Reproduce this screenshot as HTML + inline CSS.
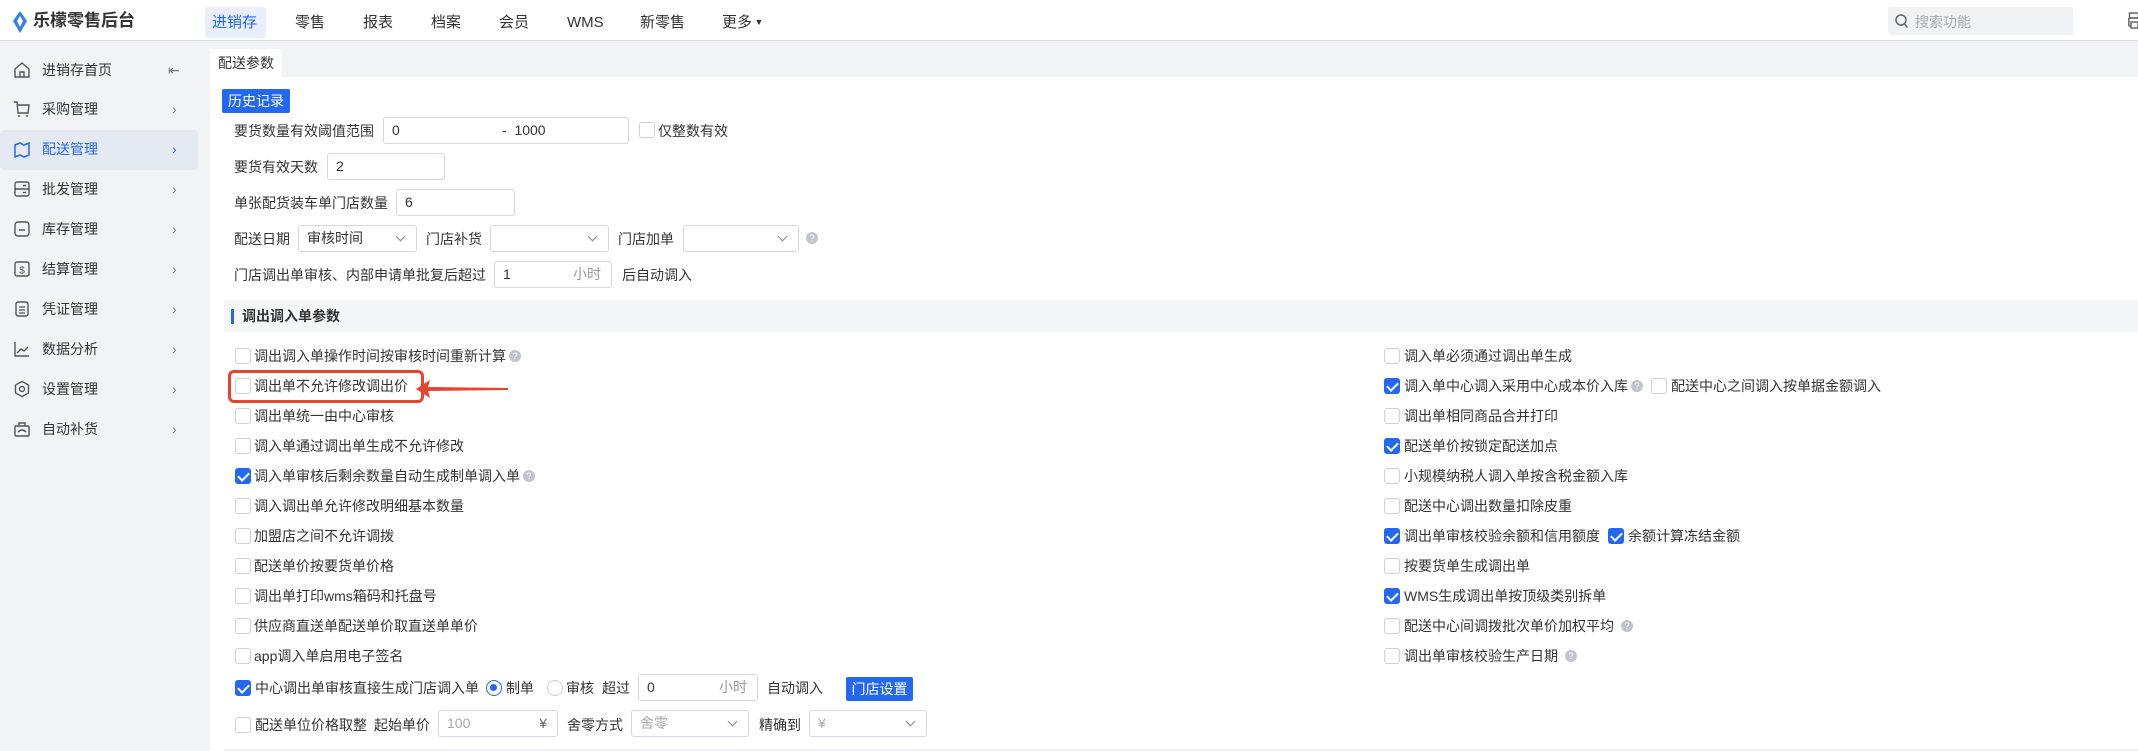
<!DOCTYPE html>
<html><head><meta charset="utf-8">
<style>
*{box-sizing:border-box;margin:0;padding:0}
body{width:2138px;height:751px;position:relative;overflow:hidden;background:#fff;font-family:"Liberation Sans","Noto Sans CJK SC",sans-serif;font-size:14px;color:#333}
.a{position:absolute;white-space:nowrap}
.hdr{left:0;top:0;width:2138px;height:41px;background:#fff;border-bottom:1px solid #dcdfe6}
.nav{top:7px;height:31px;line-height:31px;font-size:15px;color:#333}
.side{left:0;top:41px;width:210px;height:710px;background:#f2f3f5}
.si{left:0;width:198px;height:38px;line-height:38px;font-size:14px;color:#333}
.si .t{position:absolute;left:42px}
.si .c{position:absolute;left:172px;color:#777;font-size:14px}
.si svg{position:absolute;left:13px;top:10px}
.tabbar{left:210px;top:41px;width:1928px;height:36px;background:#f2f3f5}
.lbl{height:20px;line-height:20px}
.in{border:1px solid #d4d7de;border-radius:3px;background:#fff;height:27px;line-height:25px;padding-left:8px}
.cb{width:16px;height:16px;border:1px solid #cdd0d6;border-radius:3px;background:#fff}
.cb.on{background:#2468f2;border-color:#2468f2}
.cb.on:after{content:"";position:absolute;left:4px;top:1px;width:5px;height:9px;border:solid #fff;border-width:0 2px 2px 0;transform:rotate(45deg)}
.q{width:12px;height:12px;border-radius:50%;background:#c0c4cc;color:#fff;font-size:9px;line-height:12px;text-align:center}
.sel:after{content:"";position:absolute;right:12px;top:7px;width:6px;height:6px;border:solid #888;border-width:0 1.3px 1.3px 0;transform:rotate(45deg)}
</style></head><body>
<div class="a hdr"></div>
<svg class="a" style="left:12px;top:11px" width="16" height="22" viewBox="0 0 16 22"><path d="M8 0 L15 10 L8 22 L1 10 Z" fill="#2f7cf6"/><path d="M8 5 L11 10 L8 16 L5 10Z" fill="#fff"/></svg>
<div class="a" style="left:33px;top:10px;font-size:17px;font-weight:bold;color:#333;line-height:22px">乐檬零售后台</div>
<div class="a" style="left:205px;top:7px;width:61px;height:31px;background:#e8eefb;border-radius:3px"></div>
<div class="a nav" style="left:212px;color:#2468f2">进销存</div>
<div class="a nav" style="left:295px">零售</div>
<div class="a nav" style="left:363px">报表</div>
<div class="a nav" style="left:431px">档案</div>
<div class="a nav" style="left:499px">会员</div>
<div class="a nav" style="left:567px">WMS</div>
<div class="a nav" style="left:640px">新零售</div>
<div class="a nav" style="left:722px">更多<span style="font-size:9px;vertical-align:2px"> ▼</span></div>
<div class="a" style="left:1888px;top:7px;width:185px;height:28px;background:#f0f1f3;border-radius:3px"></div>
<svg class="a" style="left:1895px;top:14px" width="14" height="15" viewBox="0 0 14 15"><circle cx="6" cy="6" r="5" fill="none" stroke="#666" stroke-width="1.5"/><path d="M9.5 10 L12.5 13.5" stroke="#666" stroke-width="1.5"/></svg>
<div class="a" style="left:1915px;top:12px;font-size:14px;color:#aaa;line-height:20px">搜索功能</div>
<svg class="a" style="left:2128px;top:12px" width="12" height="18" viewBox="0 0 12 18"><rect x="1.5" y="1" width="9" height="5" fill="none" stroke="#666" stroke-width="1.5"/><rect x="0.8" y="6" width="11" height="8" rx="1" fill="none" stroke="#666" stroke-width="1.5"/><rect x="3" y="10" width="7" height="6" fill="#fff" stroke="#666" stroke-width="1.5"/></svg>

<div class="a side"></div>
<div class="a" style="left:0;top:130px;width:198px;height:40px;background:#e4e9f2;border-radius:4px"></div>
<div class="a si" style="top:51px"><svg width="18" height="18" viewBox="0 0 18 18"><path d="M2 8 L9 2 L16 8 V16 H2Z M7 16 V11 H11 V16" fill="none" stroke="#555" stroke-width="1.4"/></svg><span class="t">进销存首页</span><span class="c" style="left:168px">⇤</span></div>
<div class="a si" style="top:90px"><svg width="18" height="18" viewBox="0 0 18 18"><path d="M1 2 H4 L5 13 H15 L16 5 H5" fill="none" stroke="#555" stroke-width="1.4"/><circle cx="6" cy="16" r="1" fill="#555"/><circle cx="14" cy="16" r="1" fill="#555"/></svg><span class="t">采购管理</span><span class="c">›</span></div>
<div class="a si" style="top:130px;color:#2468f2"><svg width="18" height="18" viewBox="0 0 18 18"><path d="M2 5 L7 3 L11 5 L16 3 V15 L11 17 L7 15 L2 17Z" fill="none" stroke="#2468f2" stroke-width="1.5"/></svg><span class="t">配送管理</span><span class="c" style="color:#2468f2">›</span></div>
<div class="a si" style="top:170px"><svg width="18" height="18" viewBox="0 0 18 18"><rect x="2" y="2" width="14" height="14" rx="2" fill="none" stroke="#555" stroke-width="1.4"/><path d="M2 9 H16 M10 5.5 H13 M10 12.5 H13" stroke="#555" stroke-width="1.4"/></svg><span class="t">批发管理</span><span class="c">›</span></div>
<div class="a si" style="top:210px"><svg width="18" height="18" viewBox="0 0 18 18"><rect x="2" y="2" width="14" height="14" rx="3" fill="none" stroke="#555" stroke-width="1.4"/><path d="M6 10 H12" stroke="#555" stroke-width="1.4"/></svg><span class="t">库存管理</span><span class="c">›</span></div>
<div class="a si" style="top:250px"><svg width="18" height="18" viewBox="0 0 18 18"><rect x="2" y="2" width="14" height="14" rx="2" fill="none" stroke="#555" stroke-width="1.4"/><text x="9" y="13.5" font-size="10" text-anchor="middle" fill="#555" font-family="Liberation Sans">$</text></svg><span class="t">结算管理</span><span class="c">›</span></div>
<div class="a si" style="top:290px"><svg width="18" height="18" viewBox="0 0 18 18"><rect x="3" y="2" width="12" height="14" rx="2" fill="none" stroke="#555" stroke-width="1.4"/><path d="M6 7 H12 M6 10 H12 M6 13 H12" stroke="#555" stroke-width="1.2"/></svg><span class="t">凭证管理</span><span class="c">›</span></div>
<div class="a si" style="top:330px"><svg width="18" height="18" viewBox="0 0 18 18"><path d="M2 2 V16 H16 M4 13 L8 9 L11 11 L15 7" fill="none" stroke="#555" stroke-width="1.4"/></svg><span class="t">数据分析</span><span class="c">›</span></div>
<div class="a si" style="top:370px"><svg width="18" height="18" viewBox="0 0 18 18"><path d="M9 1.5 L15.5 5 V13 L9 16.5 L2.5 13 V5Z" fill="none" stroke="#555" stroke-width="1.4"/><circle cx="9" cy="9" r="2.5" fill="none" stroke="#555" stroke-width="1.4"/></svg><span class="t">设置管理</span><span class="c">›</span></div>
<div class="a si" style="top:410px"><svg width="18" height="18" viewBox="0 0 18 18"><rect x="2" y="6" width="14" height="10" rx="1" fill="none" stroke="#555" stroke-width="1.4"/><path d="M6 6 V3 H12 V6 M5 12 Q9 8 13 12" fill="none" stroke="#555" stroke-width="1.4"/></svg><span class="t">自动补货</span><span class="c">›</span></div>

<div class="a tabbar"></div>
<div class="a" style="left:210px;top:49px;width:72px;height:28px;background:#fff;line-height:28px;padding-left:8px;font-size:14px">配送参数</div>

<div class="a" style="left:222px;top:89px;width:68px;height:24px;background:#2468f2;color:#fff;line-height:24px;text-align:center;border-radius:2px;font-size:14px">历史记录</div>

<div class="a lbl" style="left:234px;top:121px">要货数量有效阈值范围</div>
<div class="a in" style="left:383px;top:117px;width:246px">0<span style="position:absolute;left:118px">-&nbsp; 1000</span></div>
<div class="a cb" style="left:639px;top:122px"></div>
<div class="a lbl" style="left:658px;top:121px">仅整数有效</div>

<div class="a lbl" style="left:234px;top:157px">要货有效天数</div>
<div class="a in" style="left:327px;top:153px;width:118px">2</div>
<div class="a lbl" style="left:234px;top:193px">单张配货装车单门店数量</div>
<div class="a in" style="left:396px;top:189px;width:119px">6</div>

<div class="a lbl" style="left:234px;top:229px">配送日期</div>
<div class="a in sel" style="left:298px;top:225px;width:119px">审核时间</div>
<div class="a lbl" style="left:426px;top:229px">门店补货</div>
<div class="a in sel" style="left:490px;top:225px;width:119px"></div>
<div class="a lbl" style="left:618px;top:229px">门店加单</div>
<div class="a in sel" style="left:683px;top:225px;width:116px"></div>
<div class="a q" style="left:806px;top:232px">?</div>

<div class="a lbl" style="left:234px;top:265px">门店调出单审核、内部申请单批复后超过</div>
<div class="a in" style="left:494px;top:261px;width:118px">1<span style="position:absolute;right:10px;color:#999">小时</span></div>
<div class="a lbl" style="left:622px;top:265px">后自动调入</div>

<div class="a" style="left:224px;top:300px;width:1914px;height:32px;background:#f4f5f7"></div>
<div class="a" style="left:231px;top:309px;width:3px;height:15px;background:#2468f2"></div>
<div class="a lbl" style="left:242px;top:306px;font-weight:bold">调出调入单参数</div>

<div class="a cb" style="left:235px;top:348px"></div><div class="a lbl" style="left:254px;top:346px">调出调入单操作时间按审核时间重新计算</div><div class="a q" style="left:509px;top:350px">?</div>
<div class="a cb" style="left:235px;top:378px"></div><div class="a lbl" style="left:254px;top:376px">调出单不允许修改调出价</div>
<div class="a cb" style="left:235px;top:408px"></div><div class="a lbl" style="left:254px;top:406px">调出单统一由中心审核</div>
<div class="a cb" style="left:235px;top:438px"></div><div class="a lbl" style="left:254px;top:436px">调入单通过调出单生成不允许修改</div>
<div class="a cb on" style="left:235px;top:468px"></div><div class="a lbl" style="left:254px;top:466px">调入单审核后剩余数量自动生成制单调入单</div><div class="a q" style="left:523px;top:470px">?</div>
<div class="a cb" style="left:235px;top:498px"></div><div class="a lbl" style="left:254px;top:496px">调入调出单允许修改明细基本数量</div>
<div class="a cb" style="left:235px;top:528px"></div><div class="a lbl" style="left:254px;top:526px">加盟店之间不允许调拨</div>
<div class="a cb" style="left:235px;top:558px"></div><div class="a lbl" style="left:254px;top:556px">配送单价按要货单价格</div>
<div class="a cb" style="left:235px;top:588px"></div><div class="a lbl" style="left:254px;top:586px">调出单打印wms箱码和托盘号</div>
<div class="a cb" style="left:235px;top:618px"></div><div class="a lbl" style="left:254px;top:616px">供应商直送单配送单价取直送单单价</div>
<div class="a cb" style="left:235px;top:648px"></div><div class="a lbl" style="left:254px;top:646px">app调入单启用电子签名</div>

<div class="a" style="left:228px;top:370px;width:196px;height:33px;border:3px solid #e8432d;border-radius:6px"></div>
<svg class="a" style="left:414px;top:378px" width="100" height="22" viewBox="0 0 100 22"><path d="M2 11 L16 2 L14 9 L94 10 L94 12 L14 13 L16 20 Z" fill="#e8432d"/></svg>

<div class="a cb on" style="left:235px;top:680px"></div><div class="a lbl" style="left:255px;top:678px">中心调出单审核直接生成门店调入单</div>
<div class="a" style="left:486px;top:680px;width:16px;height:16px;border:1.5px solid #2468f2;border-radius:50%"><div style="position:absolute;left:3px;top:3px;width:7px;height:7px;border-radius:50%;background:#2468f2"></div></div>
<div class="a lbl" style="left:506px;top:678px">制单</div>
<div class="a" style="left:547px;top:680px;width:16px;height:16px;border:1px solid #cdd0d6;border-radius:50%"></div>
<div class="a lbl" style="left:566px;top:678px">审核</div>
<div class="a lbl" style="left:602px;top:678px">超过</div>
<div class="a in" style="left:638px;top:674px;width:120px">0<span style="position:absolute;right:10px;color:#999">小时</span></div>
<div class="a lbl" style="left:767px;top:678px">自动调入</div>
<div class="a" style="left:846px;top:677px;width:67px;height:24px;background:#2468f2;color:#fff;border-radius:2px;line-height:24px;text-align:center">门店设置</div>

<div class="a cb" style="left:235px;top:717px"></div><div class="a lbl" style="left:255px;top:715px">配送单位价格取整</div>
<div class="a lbl" style="left:374px;top:715px">起始单价</div>
<div class="a in" style="left:438px;top:710px;width:120px;color:#aaa">100<span style="position:absolute;right:10px;color:#666">¥</span></div>
<div class="a lbl" style="left:567px;top:715px">舍零方式</div>
<div class="a in sel" style="left:631px;top:710px;width:118px;color:#aaa">舍零</div>
<div class="a lbl" style="left:759px;top:715px">精确到</div>
<div class="a in sel" style="left:809px;top:710px;width:118px;color:#aaa">¥</div>
<div class="a" style="left:224px;top:749px;width:1914px;height:2px;background:#eceef1"></div>

<div class="a cb" style="left:1384px;top:348px"></div><div class="a lbl" style="left:1404px;top:346px">调入单必须通过调出单生成</div>
<div class="a cb on" style="left:1384px;top:378px"></div><div class="a lbl" style="left:1404px;top:376px">调入单中心调入采用中心成本价入库</div><div class="a q" style="left:1631px;top:380px">?</div>
<div class="a cb" style="left:1651px;top:378px"></div><div class="a lbl" style="left:1671px;top:376px">配送中心之间调入按单据金额调入</div>
<div class="a cb" style="left:1384px;top:408px"></div><div class="a lbl" style="left:1404px;top:406px">调出单相同商品合并打印</div>
<div class="a cb on" style="left:1384px;top:438px"></div><div class="a lbl" style="left:1404px;top:436px">配送单价按锁定配送加点</div>
<div class="a cb" style="left:1384px;top:468px"></div><div class="a lbl" style="left:1404px;top:466px">小规模纳税人调入单按含税金额入库</div>
<div class="a cb" style="left:1384px;top:498px"></div><div class="a lbl" style="left:1404px;top:496px">配送中心调出数量扣除皮重</div>
<div class="a cb on" style="left:1384px;top:528px"></div><div class="a lbl" style="left:1404px;top:526px">调出单审核校验余额和信用额度</div>
<div class="a cb on" style="left:1608px;top:528px"></div><div class="a lbl" style="left:1628px;top:526px">余额计算冻结金额</div>
<div class="a cb" style="left:1384px;top:558px"></div><div class="a lbl" style="left:1404px;top:556px">按要货单生成调出单</div>
<div class="a cb on" style="left:1384px;top:588px"></div><div class="a lbl" style="left:1404px;top:586px">WMS生成调出单按顶级类别拆单</div>
<div class="a cb" style="left:1384px;top:618px"></div><div class="a lbl" style="left:1404px;top:616px">配送中心间调拨批次单价加权平均</div><div class="a q" style="left:1621px;top:620px">?</div>
<div class="a cb" style="left:1384px;top:648px"></div><div class="a lbl" style="left:1404px;top:646px">调出单审核校验生产日期</div><div class="a q" style="left:1565px;top:650px">?</div>
</body></html>
